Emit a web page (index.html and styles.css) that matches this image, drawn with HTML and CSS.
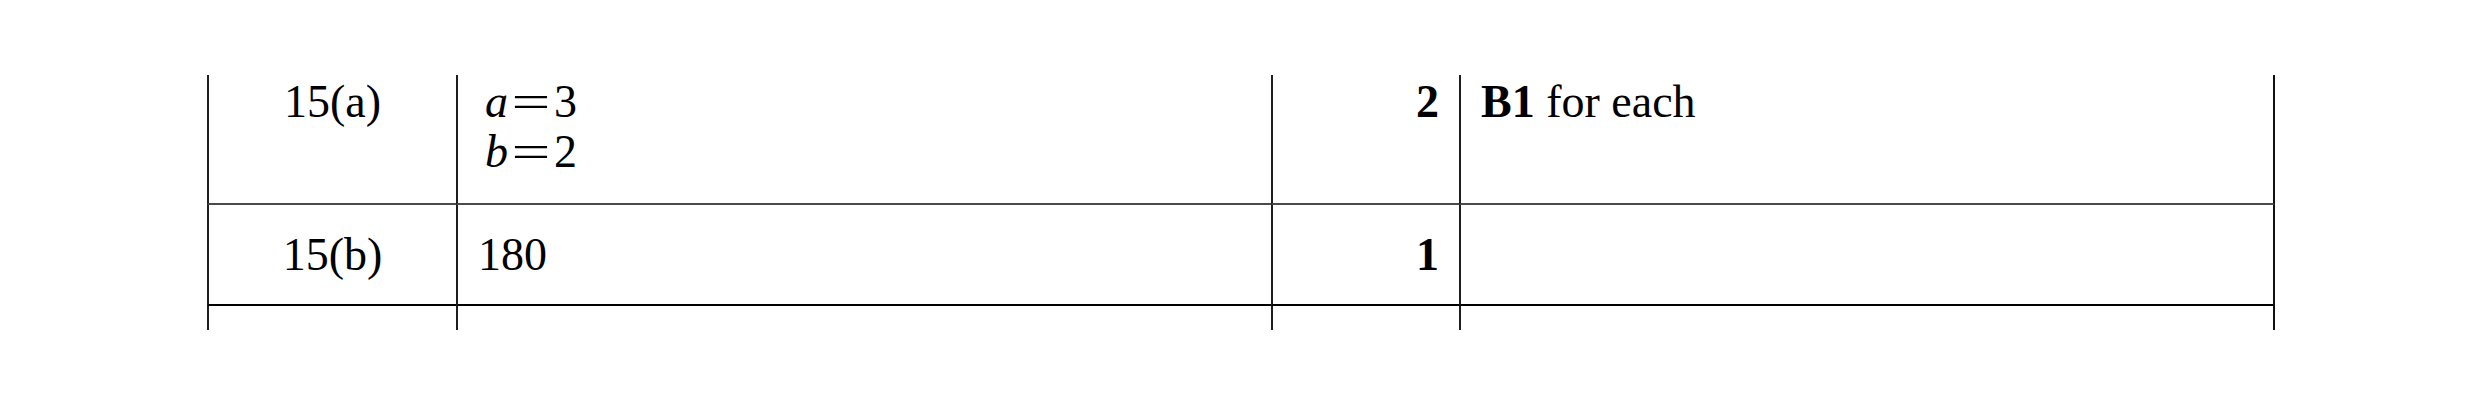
FILE: index.html
```html
<!DOCTYPE html>
<html lang="en">
<head>
<meta charset="utf-8">
<title>Mark scheme</title>
<link rel="stylesheet" href="styles.css">
</head>
<body>
<div class="sheet">
  <div class="grid">
    <div class="cell q row1">15(a)</div>
    <div class="cell ans row1">
      <div class="math"><i>a</i><span class="eq">=</span>3</div>
      <div class="math"><i>b</i><span class="eq">=</span>2</div>
    </div>
    <div class="cell mark row1">2</div>
    <div class="cell note last row1"><b>B1</b> for each</div>

    <div class="cell q row2">15(b)</div>
    <div class="cell ans row2">180</div>
    <div class="cell mark row2">1</div>
    <div class="cell note last row2"></div>

    <div class="cell q row3"></div>
    <div class="cell ans row3"></div>
    <div class="cell mark row3"></div>
    <div class="cell note last row3"></div>
  </div>
</div>
</body>
</html>
```

FILE: styles.css
```css
html, body {
  margin: 0;
  padding: 0;
  background: #ffffff;
}

.sheet {
  padding: 75px 0 0 207px;
  font-family: "Liberation Serif", "Times New Roman", serif;
  font-size: 46px;
  line-height: 50px;
  color: #000;
}

.grid {
  display: grid;
  grid-template-columns: 249px 815px 188px 816px;
  grid-template-rows: 130px 101px 24px;
}

.cell {
  box-sizing: border-box;
  border-left: 2px solid #1e1e1e;
  padding: 0 20px;
}

.cell.last {
  border-right: 2px solid #111;
}

.row1 {
  border-bottom: 2px solid #4a4a4a;
  padding-top: 2px;
}

.row2 {
  border-bottom: 2px solid #000;
  display: flex;
  align-items: center;
}

.q { text-align: center; }
.q.row2 { justify-content: center; }

.mark {
  text-align: right;
  font-weight: bold;
}
.mark.row2 { justify-content: flex-end; }

.math {
  padding-left: 7px;
}

.math i {
  font-style: italic;
}

.eq {
  display: inline-block;
  width: 46px;
  text-align: center;
  transform: scaleX(1.5);
}
```
